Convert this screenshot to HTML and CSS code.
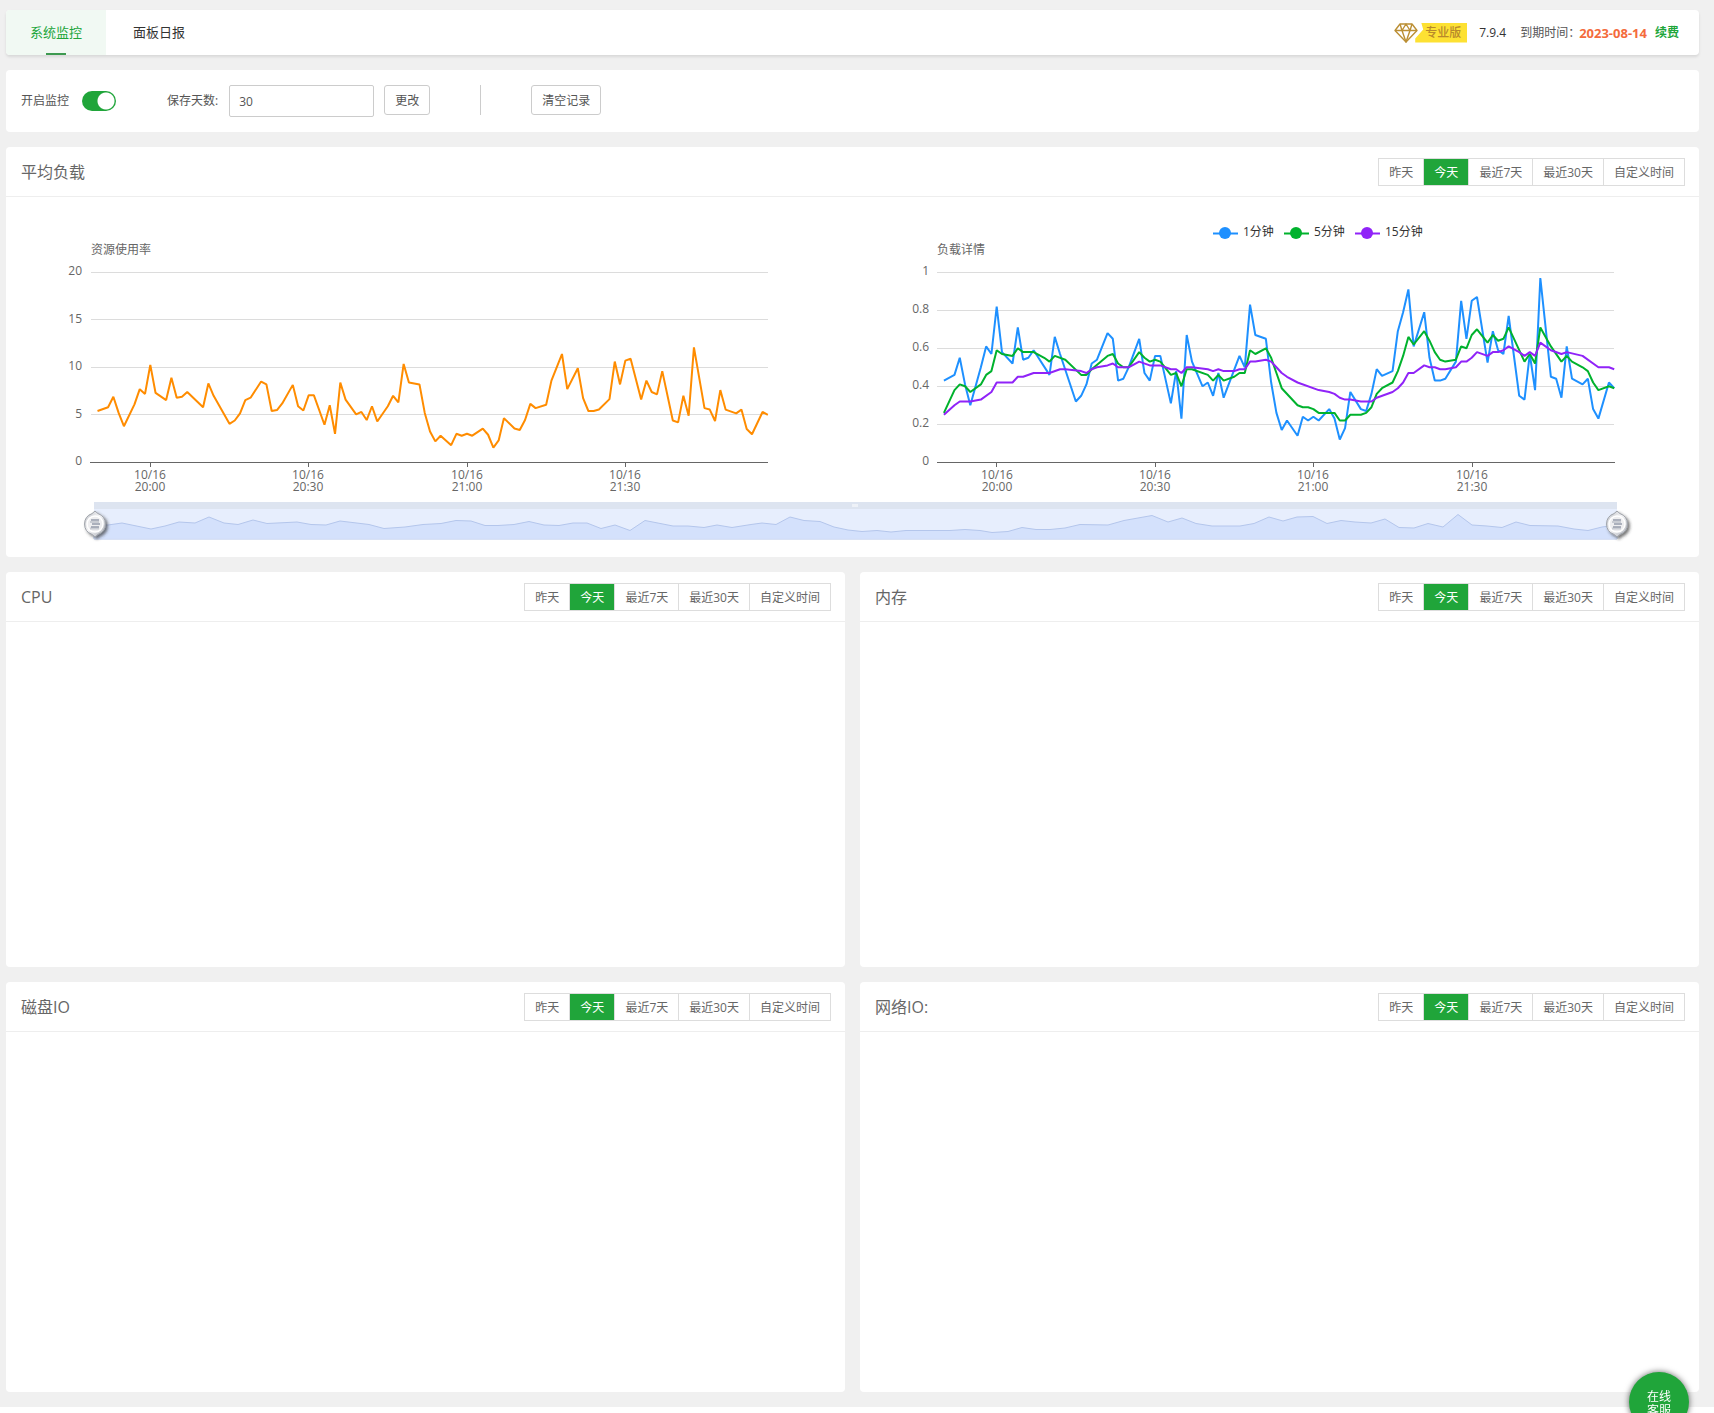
FILE: index.html
```html
<!DOCTYPE html>
<html lang="zh-CN">
<head>
<meta charset="utf-8">
<title>系统监控</title>
<link rel="stylesheet" href="styles.css">
</head>
<body>
<main class="page">
  <header class="topbar">
    <nav class="tabs">
      <a class="tab tab-active" href="#monitor">系统监控</a>
      <a class="tab" href="#daily">面板日报</a>
    </nav>
    <div class="license">
      <span class="pro">
        <svg class="gem" width="24" height="20" viewBox="0 0 24 20" fill="none" stroke="#bb8f35" stroke-width="1.4" stroke-linejoin="round"><path d="M6 1H18L23 7.5L12 19L1 7.5Z"/><path d="M1 7.5H23M6 1L8 7.5L12 19L16 7.5L18 1M8 7.5L12 1L16 7.5"/></svg>
        <span class="pro-label">专业版</span>
      </span>
      <span class="version">7.9.4</span>
      <span class="expiry">到期时间：</span>
      <strong class="date">2023-08-14</strong>
      <a class="renew" href="#renew">续费</a>
    </div>
  </header>

  <form class="controls">
    <label class="field switch-field">开启监控 <input class="switch" type="checkbox" checked></label>
    <label class="field" for="days">保存天数:</label>
    <input class="days" id="days" type="text" value="30">
    <button class="btn" type="button">更改</button>
    <span class="divider"></span>
    <button class="btn" type="button">清空记录</button>
  </form>

  <section class="card card-wide">
    <div class="card-head">
      <h2 class="title">平均负载</h2>
      <div class="range">
        <button type="button">昨天</button><button type="button" class="on">今天</button><button type="button">最近7天</button><button type="button">最近30天</button><button type="button">自定义时间</button>
      </div>
    </div>
    <svg class="load-chart" viewBox="6 197 1693 360" role="img" aria-label="平均负载">
      <defs>
        <linearGradient id="metal" x1="0" y1="0" x2="1" y2="1"><stop offset="0" stop-color="#b9bcc2"/><stop offset=".45" stop-color="#f4f4f6"/><stop offset="1" stop-color="#a9adb5"/></linearGradient>
        <filter id="knob-shadow" x="-50%" y="-50%" width="200%" height="200%"><feDropShadow dx="2" dy="2" stdDeviation="1.4" flood-color="#333" flood-opacity=".65"/></filter>
        <g id="knob">
          <path d="M0-13L3-10.4A11 11 0 0 1 3 10.4L0 13L-3 10.4A11 11 0 0 1-3-10.4Z" fill="url(#metal)" stroke="#9da1a8" stroke-width="1" filter="url(#knob-shadow)"/>
          <circle r="8" fill="#eeeef0" stroke="#fff" stroke-width="1.5"/>
          <path d="M-5-2H4M-5 4.500H4" stroke="#c9ccd3" stroke-width="2"/>
          <path d="M-4-4H4M-3 0H5M-4 3H4" fill="none" stroke="#959cab" stroke-width="1.6"/>
        </g>
      </defs>

      <text class="label" x="91" y="254">资源使用率</text>
      <path class="grid" d="M91 272.5H768M91 319.5H768M91 367.5H768M91 414.5H768"/>
      <path class="axis" d="M90 462.5H768M150.5 462V467M308.5 462V467M467.5 462V467M625.5 462V467"/>
      <g class="label end"><text x="82" y="275">20</text><text x="82" y="323">15</text><text x="82" y="370">10</text><text x="82" y="418">5</text><text x="82" y="465">0</text></g>
      <g class="label mid">
        <text x="150" y="479">10/16</text><text x="150" y="491">20:00</text>
        <text x="308" y="479">10/16</text><text x="308" y="491">20:30</text>
        <text x="467" y="479">10/16</text><text x="467" y="491">21:00</text>
        <text x="625" y="479">10/16</text><text x="625" y="491">21:30</text>
      </g>
      <!-- x: minutes from 20:00, y: percent used -->
      <polyline class="line use" transform="translate(150.3 462.3) scale(5.278 -9.5)" points="-10,5.4 -8,5.8 -7,6.9 -6,5.2 -5,3.8 -3,6.1 -2,7.7 -1,7.2 0,10.25 1,7.3 3,6.55 4,8.9 5,6.8 6,6.9 7,7.4 10,5.8 11,8.3 12,7 15,4.05 16,4.4 17,5.15 18,6.55 19,6.8 21,8.5 22,8.2 23,5.4 24,5.5 25,6.2 27,8.15 28,5.9 29,5.45 30,7.05 31,7.05 33,3.95 34,6 35,3 36,8.4 37,6.6 39,5.05 40,5.3 41,4.45 42,5.9 43,4.3 45,5.9 46,7 47,6.3 48,10.35 49,8.4 51,8.2 52,5.2 53,3.25 54,2.2 55,2.8 57,1.8 58,3 59,2.8 60,3 61,2.8 63,3.55 64,2.9 65,1.55 66,2.3 67,4.65 69,3.55 70,3.4 71,4.45 72,6.15 73,5.7 75,6.05 76,8.6 77,10 78,11.4 79,7.7 81,9.9 82,6.75 83,5.4 84,5.4 85,5.55 87,6.65 88,10.6 89,8.2 90,10.7 91,10.9 93,6.6 94,8.6 95,7.4 96,7.15 97,9.6 99,4.4 100,4.2 101,7 102,4.9 103,12.1 105,5.7 106,5.55 107,4.35 108,7.6 109,5.55 111,5.15 112,5.55 113,3.5 114,2.95 116,5.3 117,5"/>

      <g class="legend">
        <path d="M1213 233.5H1238" stroke="#1e90ff"/><circle cx="1225" cy="233" r="6" fill="#1e90ff"/><text x="1243" y="236">1分钟</text>
        <path d="M1284 233.5H1309" stroke="#00b22d"/><circle cx="1296" cy="233" r="6" fill="#00b22d"/><text x="1314" y="236">5分钟</text>
        <path d="M1355 233.5H1380" stroke="#9023f8"/><circle cx="1367" cy="233" r="6" fill="#9023f8"/><text x="1385" y="236">15分钟</text>
      </g>
      <text class="label" x="937" y="254">负载详情</text>
      <path class="grid" d="M937 272.5H1614M937 310.5H1614M937 348.5H1614M937 386.5H1614M937 424.5H1614"/>
      <path class="axis" d="M937 462.5H1615M996.5 462V467M1155.5 462V467M1313.5 462V467M1472.5 462V467"/>
      <g class="label end"><text x="929" y="275">1</text><text x="929" y="313">0.8</text><text x="929" y="351">0.6</text><text x="929" y="389">0.4</text><text x="929" y="427">0.2</text><text x="929" y="465">0</text></g>
      <g class="label mid">
        <text x="997" y="479">10/16</text><text x="997" y="491">20:00</text>
        <text x="1155" y="479">10/16</text><text x="1155" y="491">20:30</text>
        <text x="1313" y="479">10/16</text><text x="1313" y="491">21:00</text>
        <text x="1472" y="479">10/16</text><text x="1472" y="491">21:30</text>
      </g>
      <!-- x: minutes from 20:00, y: load -->
      <g transform="translate(996.7 462.3) scale(5.278 -190)">
        <polyline class="line one" points="-10,.43 -8,.46 -7,.55 -6,.41 -5,.30 -3,.5 -2,.61 -1,.57 0,.82 1,.58 3,.52 4,.71 5,.54 6,.55 7,.59 10,.46 11,.66 12,.57 15,.32 16,.35 17,.41 18,.52 19,.54 21,.68 22,.65 23,.43 24,.44 25,.5 27,.65 28,.47 29,.43 30,.56 31,.56 33,.31 34,.48 35,.23 36,.67 37,.53 39,.40 40,.42 41,.35 42,.47 43,.34 46,.56 47,.5 48,.83 49,.67 51,.65 52,.42 53,.26 54,.17 55,.22 57,.14 58,.24 59,.22 60,.24 61,.22 63,.28 64,.23 65,.12 66,.18 67,.37 69,.28 70,.27 71,.36 72,.49 73,.455 75,.48 76,.69 77,.79 78,.91 79,.61 81,.79 82,.55 83,.43 84,.43 85,.44 87,.53 88,.85 89,.65 90,.85 91,.87 93,.525 94,.69 95,.59 96,.57 97,.77 99,.35 100,.33 101,.57 102,.38 103,.97 105,.45 106,.44 107,.34 108,.61 109,.44 111,.41 112,.44 113,.28 114,.23 116,.42 117,.39"/>
        <polyline class="line five" points="-10,.26 -8,.38 -7,.41 -6,.4 -5,.37 -3,.41 -2,.46 -1,.48 0,.59 1,.57 3,.56 4,.6 5,.58 7,.58 9,.55 10,.53 11,.56 13,.54 16,.46 17,.46 18,.49 21,.56 22,.57 23,.52 24,.5 25,.5 27,.58 28,.55 29,.53 30,.54 31,.53 33,.46 34,.47 35,.4 36,.49 37,.49 40,.46 41,.43 42,.46 43,.43 45,.45 46,.47 47,.47 48,.59 49,.57 51,.6 52,.55 53,.47 54,.39 57,.3 58,.29 59,.29 60,.28 61,.26 64,.26 65,.22 66,.22 67,.25 69,.25 70,.26 71,.29 72,.36 73,.39 75,.42 76,.48 77,.56 78,.66 79,.62 81,.69 82,.64 83,.58 84,.54 85,.53 87,.54 88,.61 89,.6 90,.67 91,.7 93,.63 94,.67 95,.64 96,.65 97,.71 99,.59 100,.53 101,.57 102,.52 103,.71 105,.61 107,.53 108,.56 109,.53 111,.5 112,.48 113,.42 114,.38 116,.4 117,.39"/>
        <polyline class="line fifteen" points="-10,.25 -8,.3 -7,.32 -5,.32 -3,.33 -1,.37 0,.42 3,.42 4,.45 5,.45 7,.47 10,.47 12,.49 13,.49 16,.48 17,.47 18,.49 19,.5 21,.51 22,.52 23,.5 25,.5 27,.53 29,.51 31,.51 33,.49 34,.49 35,.47 36,.5 37,.5 40,.49 41,.48 42,.49 43,.48 45,.48 46,.49 47,.49 48,.53 49,.53 51,.54 52,.53 53,.5 54,.47 55,.45 57,.42 61,.38 63,.37 64,.36 65,.34 66,.33 67,.33 69,.32 71,.32 72,.34 75,.37 76,.39 77,.42 78,.47 79,.47 81,.51 82,.5 83,.5 84,.49 85,.49 87,.5 88,.53 89,.53 90,.55 91,.58 93,.56 94,.58 95,.58 96,.59 97,.61 99,.58 100,.56 101,.58 102,.56 103,.63 105,.59 107,.57 108,.58 111,.56 114,.5 116,.5 117,.49"/>
      </g>

      <rect x="94" y="502" width="1523" height="37" fill="#e7eefd"/>
      <path d="M94 539V525L108 525 122 523 151 529 165 526 179 522 195 523 209 517 224 523 238 524.5 253 520 267 523.5 297 522 311 524.5 326 525 340 521 369 524.5 384 528.5 405 527 423 524.5 441 523.5 456 520.5 471 521 485 525.5 498 525.5 514 524.5 529 521.5 544 525 559 525.5 573 523 587 523 601 528.5 615 525 630 530.5 645 520.5 673 526 688 526 704 527.5 717 525 732 527.5 751 524.5 762 523 776 524.5 790 517 804 520.5 820 521.5 834 527 848 530 862 531.5 877 530.5 891 532 906 530.5 950 530.5 965 529.5 980 530.5 992 532.5 1008 531.5 1022 527.5 1036 529.5 1050 529.5 1065 528 1080 524.5 1108 525 1124 520.5 1152 515.5 1168 522 1182 518 1196 523.5 1212 526 1240 526 1254 523.5 1269 517 1283 521 1297 517 1313 516.5 1327 523.5 1341 520.5 1355 522 1371 523 1385 519 1399 527.5 1414 528 1428 523.5 1443 527 1458 514.5 1472 525 1487 526 1502 527.5 1516 522 1530 525.5 1558 526 1574 529 1588 530.5 1602 527 1617 525V539Z" fill="#d4e1fc" stroke="#b4c6ec" stroke-width="1"/>
      <path d="M94 538.5H1617" stroke="#d3dffa"/>
      <rect x="94" y="502" width="1523" height="7" fill="#dde4f0"/>
      <path d="M853 504V507M855 504V507M857 504V507" stroke="#fff"/>
      <use href="#knob" x="95" y="524"/>
      <use href="#knob" x="1617" y="524"/>
    </svg>
  </section>

  <div class="pair">
    <section class="card">
      <div class="card-head">
        <h2 class="title">CPU</h2>
        <div class="range">
          <button type="button">昨天</button><button type="button" class="on">今天</button><button type="button">最近7天</button><button type="button">最近30天</button><button type="button">自定义时间</button>
        </div>
      </div>
      <div class="chart-area"></div>
    </section>
    <section class="card">
      <div class="card-head">
        <h2 class="title">内存</h2>
        <div class="range">
          <button type="button">昨天</button><button type="button" class="on">今天</button><button type="button">最近7天</button><button type="button">最近30天</button><button type="button">自定义时间</button>
        </div>
      </div>
      <div class="chart-area"></div>
    </section>
  </div>

  <div class="pair">
    <section class="card">
      <div class="card-head">
        <h2 class="title">磁盘IO</h2>
        <div class="range">
          <button type="button">昨天</button><button type="button" class="on">今天</button><button type="button">最近7天</button><button type="button">最近30天</button><button type="button">自定义时间</button>
        </div>
      </div>
      <div class="chart-area chart-tall"></div>
    </section>
    <section class="card">
      <div class="card-head">
        <h2 class="title">网络IO:</h2>
        <div class="range">
          <button type="button">昨天</button><button type="button" class="on">今天</button><button type="button">最近7天</button><button type="button">最近30天</button><button type="button">自定义时间</button>
        </div>
      </div>
      <div class="chart-area chart-tall"></div>
    </section>
  </div>
</main>
<button class="support" type="button">在线<br>客服</button>
</body>
</html>
```
FILE: styles.css
```css
* { box-sizing: border-box; }

body {
  margin: 0;
  background: #fff;
  color: #555;
  font: 12px/20px "Open Sans", "Noto Sans CJK SC", sans-serif;
}

button, input { font: inherit; color: inherit; }
a { color: inherit; text-decoration: none; }

.page {
  display: flex;
  flex-direction: column;
  gap: 15px;
  padding: 10px 15px 15px 6px;
  background: #f0f0f0;
}

.topbar {
  display: flex;
  justify-content: space-between;
  height: 45px;
  background: #fff;
  border-radius: 4px;
  box-shadow: 0 2px 3px rgba(0, 0, 0, .1);
}

.tabs { display: flex; gap: 3px; }

.tab {
  padding: 0 24px;
  font-size: 13px;
  line-height: 45px;
  color: #333;
}

.tab-active {
  color: #20a53a;
  background: linear-gradient(#3d9a50, #3d9a50) center bottom / 20px 2px no-repeat #f1f9f3;
  border-radius: 4px 0 0 4px;
}

.license {
  display: flex;
  align-items: center;
  padding: 0 20px 0 0;
}

.pro { display: flex; height: 20px; margin-right: 12px; }
.gem { display: block; margin-right: -3px; }

.pro-label {
  padding: 0 6px 0 10px;
  color: #b8892b;
  font-weight: 500;
  background: #fde133;
  clip-path: polygon(6px 0, 100% 0, 100% 100%, 0 100%, 0 16px, 8px 7px);
}

.version { margin-right: 14px; color: #333; }
.date { margin-left: -1px; font-size: 13px; color: #f46b3c; }
.renew { margin-left: 8px; color: #20a53a; font-weight: 700; }

.controls {
  display: flex;
  align-items: flex-start;
  min-height: 62px;
  padding: 15px;
  background: #fff;
  border-radius: 4px;
}

.field { display: flex; align-items: center; height: 32px; margin-right: 11px; }
.switch-field { gap: 13px; margin-right: 51px; }

.switch {
  appearance: none;
  width: 34px;
  height: 20px;
  margin: 0;
  border-radius: 10px;
  background: radial-gradient(circle at 24px 10px, #fff 8px, #20a53a 9px);
}

.days {
  width: 145px;
  height: 32px;
  margin-right: 10px;
  padding: 0 9px;
  border: 1px solid #ccc;
  border-radius: 2px;
  background: #fff;
}

.btn {
  height: 30px;
  padding: 2px 10px 0;
  border: 1px solid #ccc;
  border-radius: 3px;
  background: #fff;
}

.divider { width: 1px; height: 30px; margin: 0 50px; background: #ccc; }

.card { min-width: 0; background: #fff; border-radius: 4px; }

.card-head {
  display: flex;
  align-items: center;
  justify-content: space-between;
  height: 50px;
  padding: 0 14px 0 15px;
  border-bottom: 1px solid #eee;
}

.title { margin: 0; font-size: 16px; font-weight: 400; line-height: 24px; color: #666; }

.range { display: flex; border: 1px solid #ddd; }

.range button {
  height: 26px;
  padding: 2px 10px 0;
  border: 0;
  border-right: 1px solid #ddd;
  background: #fff;
  color: #666;
}

.range button:last-child { border-right: 0; }
.range .on { background: #20a53a; color: #fff; }

.load-chart { display: block; width: 100%; height: auto; font-size: 12px; }
.label { fill: #666; }
.end { text-anchor: end; }
.mid { text-anchor: middle; }
.grid { stroke: #dcdcdc; }
.axis { stroke: #666; }
.legend { fill: #333; stroke-width: 2; }
.line { fill: none; stroke-width: 2; stroke-linejoin: bevel; vector-effect: non-scaling-stroke; }
.use { stroke: #ff8c00; }
.one { stroke: #1e90ff; }
.five { stroke: #00b22d; }
.fifteen { stroke: #9023f8; }

.pair { display: grid; grid-template-columns: 1fr 1fr; gap: 15px; }
.chart-area { min-height: 345px; }
.chart-tall { min-height: 360px; }

.support {
  position: fixed;
  right: 25px;
  bottom: -19px;
  width: 60px;
  height: 60px;
  padding: 4px 0 0;
  border: 0;
  border-radius: 50%;
  background: #20a53a;
  color: #fff;
  line-height: 14px;
  box-shadow: 0 0 6px rgba(0, 0, 0, .6);
}
```
